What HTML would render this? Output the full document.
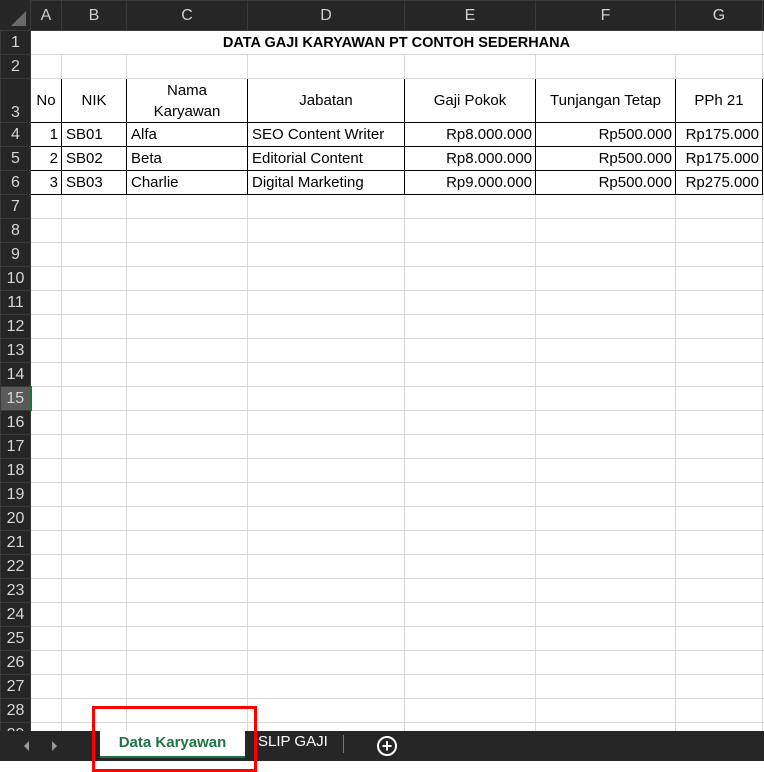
<!DOCTYPE html>
<html><head><meta charset="utf-8"><style>
body{margin:0;width:764px;height:761px;overflow:hidden;background:#fff;font-family:"Liberation Sans",sans-serif;position:relative}
table{border-collapse:collapse;table-layout:fixed;width:764px;position:absolute;left:0;top:0}
td{border:1px solid #d9d9d9;padding:0 3px;font-size:15px;color:#000;height:23px;white-space:nowrap;overflow:hidden;line-height:18px}
tr.h td{background:#262626;color:#cfcfcf;text-align:center;height:29px;border-color:#3a3a3a;font-size:16px;padding:0}
td.rh{background:#262626;color:#d6d6d6;text-align:center;border-color:#3a3a3a;font-size:16px;padding:0}
td.sel{background:#5a5a5a;border-right:2px solid #217346}
.b{border:1px solid #000}
.r{text-align:right}
.c{text-align:center}
td.l{padding-left:4px}
#bar{position:absolute;left:0;top:731px;width:764px;height:30px;background:#262626}
</style></head><body>
<table>
<colgroup><col style="width:30px"><col style="width:31px"><col style="width:65px"><col style="width:121px"><col style="width:157px"><col style="width:131px"><col style="width:140px"><col style="width:87px"><col style="width:2px"></colgroup>
<tr class="h"><td style="background:#262626"></td><td>A</td><td>B</td><td>C</td><td>D</td><td>E</td><td>F</td><td>G</td><td></td></tr>
<tr><td class="rh">1</td><td colspan="7" class="c" style="font-weight:bold;font-size:14.5px">DATA GAJI KARYAWAN PT CONTOH SEDERHANA</td><td></td></tr>
<tr><td class="rh">2</td><td></td><td></td><td></td><td></td><td></td><td></td><td></td><td></td></tr>
<tr style="height:44px"><td class="rh" style="vertical-align:bottom;height:43px">3</td><td class="b c">No</td><td class="b c">NIK</td><td class="b c" style="line-height:21px">Nama<br>Karyawan</td><td class="b c">Jabatan</td><td class="b c">Gaji Pokok</td><td class="b c">Tunjangan Tetap</td><td class="b c">PPh 21</td><td></td></tr>
<tr><td class="rh">4</td><td class="b r">1</td><td class="b l">SB01</td><td class="b l">Alfa</td><td class="b l">SEO Content Writer</td><td class="b r">Rp8.000.000</td><td class="b r">Rp500.000</td><td class="b r">Rp175.000</td><td></td></tr>
<tr><td class="rh">5</td><td class="b r">2</td><td class="b l">SB02</td><td class="b l">Beta</td><td class="b l">Editorial Content</td><td class="b r">Rp8.000.000</td><td class="b r">Rp500.000</td><td class="b r">Rp175.000</td><td></td></tr>
<tr><td class="rh">6</td><td class="b r">3</td><td class="b l">SB03</td><td class="b l">Charlie</td><td class="b l">Digital Marketing</td><td class="b r">Rp9.000.000</td><td class="b r">Rp500.000</td><td class="b r">Rp275.000</td><td></td></tr>
<tr><td class="rh">7</td><td></td><td></td><td></td><td></td><td></td><td></td><td></td><td></td></tr>
<tr><td class="rh">8</td><td></td><td></td><td></td><td></td><td></td><td></td><td></td><td></td></tr>
<tr><td class="rh">9</td><td></td><td></td><td></td><td></td><td></td><td></td><td></td><td></td></tr>
<tr><td class="rh">10</td><td></td><td></td><td></td><td></td><td></td><td></td><td></td><td></td></tr>
<tr><td class="rh">11</td><td></td><td></td><td></td><td></td><td></td><td></td><td></td><td></td></tr>
<tr><td class="rh">12</td><td></td><td></td><td></td><td></td><td></td><td></td><td></td><td></td></tr>
<tr><td class="rh">13</td><td></td><td></td><td></td><td></td><td></td><td></td><td></td><td></td></tr>
<tr><td class="rh">14</td><td></td><td></td><td></td><td></td><td></td><td></td><td></td><td></td></tr>
<tr><td class="rh sel">15</td><td></td><td></td><td></td><td></td><td></td><td></td><td></td><td></td></tr>
<tr><td class="rh">16</td><td></td><td></td><td></td><td></td><td></td><td></td><td></td><td></td></tr>
<tr><td class="rh">17</td><td></td><td></td><td></td><td></td><td></td><td></td><td></td><td></td></tr>
<tr><td class="rh">18</td><td></td><td></td><td></td><td></td><td></td><td></td><td></td><td></td></tr>
<tr><td class="rh">19</td><td></td><td></td><td></td><td></td><td></td><td></td><td></td><td></td></tr>
<tr><td class="rh">20</td><td></td><td></td><td></td><td></td><td></td><td></td><td></td><td></td></tr>
<tr><td class="rh">21</td><td></td><td></td><td></td><td></td><td></td><td></td><td></td><td></td></tr>
<tr><td class="rh">22</td><td></td><td></td><td></td><td></td><td></td><td></td><td></td><td></td></tr>
<tr><td class="rh">23</td><td></td><td></td><td></td><td></td><td></td><td></td><td></td><td></td></tr>
<tr><td class="rh">24</td><td></td><td></td><td></td><td></td><td></td><td></td><td></td><td></td></tr>
<tr><td class="rh">25</td><td></td><td></td><td></td><td></td><td></td><td></td><td></td><td></td></tr>
<tr><td class="rh">26</td><td></td><td></td><td></td><td></td><td></td><td></td><td></td><td></td></tr>
<tr><td class="rh">27</td><td></td><td></td><td></td><td></td><td></td><td></td><td></td><td></td></tr>
<tr><td class="rh">28</td><td></td><td></td><td></td><td></td><td></td><td></td><td></td><td></td></tr>
<tr><td class="rh">29</td><td></td><td></td><td></td><td></td><td></td><td></td><td></td><td></td></tr>
</table>
<div style="position:absolute;left:0;top:0;width:30px;height:30px;background:#262626"></div>
<div style="position:absolute;left:11px;top:11px;width:0;height:0;border-left:15px solid transparent;border-bottom:15px solid #6a6a6a"></div>
<div id="bar">
<div style="position:absolute;left:24px;top:10px;border-right:5px solid #9a9a9a;border-top:5px solid transparent;border-bottom:5px solid transparent"></div>
<div style="position:absolute;left:52px;top:10px;border-left:5px solid #9a9a9a;border-top:5px solid transparent;border-bottom:5px solid transparent"></div>
<div style="position:absolute;left:100px;top:0;width:145px;height:25px;background:#fff;border-bottom:2px solid #217346;color:#217346;font-weight:bold;font-size:15px;text-align:center;line-height:24px">Data Karyawan</div>
<div style="position:absolute;left:258px;top:2px;color:#fff;font-size:15px">SLIP GAJI</div>
<div style="position:absolute;left:343px;top:4px;width:1px;height:18px;background:#777"></div>
<div style="position:absolute;left:377px;top:5px;width:16px;height:16px;border:2px solid #fff;border-radius:50%;color:#fff;font-size:18px;line-height:16px;text-align:center;font-weight:bold">+</div>
</div>
<div style="position:absolute;left:92px;top:706px;width:159px;height:60px;border:3px solid #ff0000"></div>
</body></html>
